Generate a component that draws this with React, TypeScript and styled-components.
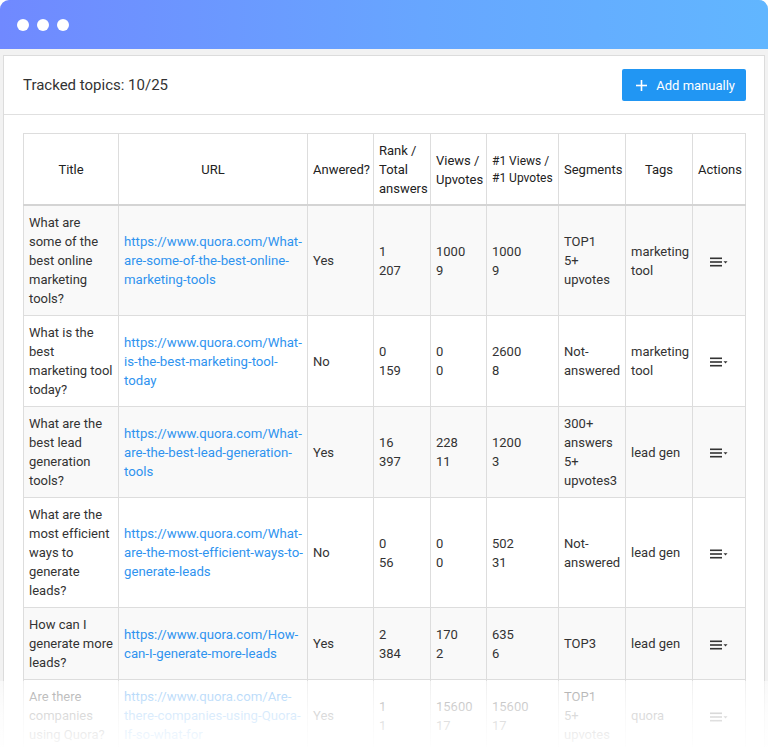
import styled, { createGlobalStyle } from "styled-components";

const GlobalStyle = createGlobalStyle`
    html, body {
        margin: 0;
        padding: 0;
        background: #fff;
    }
    body {
        font-family: Roboto, "Liberation Sans", sans-serif;
        color: #333;
    }
`;

type Topic = {
    title: string;
    url: string;
    answered: string;
    rank: [string, string];
    views: [string, string];
    top: [string, string];
    segments: string[];
    tags: string;
};

const topics: Topic[] = [
    {
        title: "What are some of the best online marketing tools?",
        url: "https://www.quora.com/What-are-some-of-the-best-online-marketing-tools",
        answered: "Yes",
        rank: ["1", "207"],
        views: ["1000", "9"],
        top: ["1000", "9"],
        segments: ["TOP1", "5+ upvotes"],
        tags: "marketing tool",
    },
    {
        title: "What is the best marketing tool today?",
        url: "https://www.quora.com/What-is-the-best-marketing-tool-today",
        answered: "No",
        rank: ["0", "159"],
        views: ["0", "0"],
        top: ["2600", "8"],
        segments: ["Not-answered"],
        tags: "marketing tool",
    },
    {
        title: "What are the best lead generation tools?",
        url: "https://www.quora.com/What-are-the-best-lead-generation-tools",
        answered: "Yes",
        rank: ["16", "397"],
        views: ["228", "11"],
        top: ["1200", "3"],
        segments: ["300+ answers", "5+ upvotes3"],
        tags: "lead gen",
    },
    {
        title: "What are the most efficient ways to generate leads?",
        url: "https://www.quora.com/What-are-the-most-efficient-ways-to-generate-leads",
        answered: "No",
        rank: ["0", "56"],
        views: ["0", "0"],
        top: ["502", "31"],
        segments: ["Not-answered"],
        tags: "lead gen",
    },
    {
        title: "How can I generate more leads?",
        url: "https://www.quora.com/How-can-I-generate-more-leads",
        answered: "Yes",
        rank: ["2", "384"],
        views: ["170", "2"],
        top: ["635", "6"],
        segments: ["TOP3"],
        tags: "lead gen",
    },
    {
        title: "Are there companies using Quora?",
        url: "https://www.quora.com/Are-there-companies-using-Quora-If-so-what-for",
        answered: "Yes",
        rank: ["1", "1"],
        views: ["15600", "17"],
        top: ["15600", "17"],
        segments: ["TOP1", "5+ upvotes"],
        tags: "quora",
    },
];

const columns = [95, 189, 66, 57, 56, 72, 67, 67, 53];

function MenuIcon() {
    return (
        <svg width="18" height="10" viewBox="0 0 18 10">
            <rect x="0" y="0.5" width="12" height="1.6" fill="#333" />
            <rect x="0" y="4.2" width="12" height="1.6" fill="#333" />
            <rect x="0" y="7.9" width="12" height="1.6" fill="#333" />
            <path d="M13.5 4.2 L17.5 4.2 L15.5 6.4 Z" fill="#333" />
        </svg>
    );
}

function PlusIcon() {
    return (
        <svg width="11" height="11" viewBox="0 0 11 11">
            <rect x="4.7" y="0" width="1.6" height="11" fill="#fff" />
            <rect x="0" y="4.7" width="11" height="1.6" fill="#fff" />
        </svg>
    );
}

export default function App() {
    return (
        <Page>
            <GlobalStyle />
            <Window>
                <TitleBar>
                    <Dot />
                    <Dot />
                    <Dot />
                </TitleBar>
                <Body>
                    <Card>
                        <CardHeader>
                            <Counter>Tracked topics: 10/25</Counter>
                            <AddButton>
                                <PlusIcon />
                                Add manually
                            </AddButton>
                        </CardHeader>
                        <CardBody>
                            <Table>
                                <colgroup>
                                    {columns.map((w, i) => (
                                        <col key={i} style={{ width: w }} />
                                    ))}
                                </colgroup>
                                <thead>
                                    <tr>
                                        <Th><HeadText>Title</HeadText></Th>
                                        <Th><HeadText>URL</HeadText></Th>
                                        <Th><HeadText>Anwered?</HeadText></Th>
                                        <Th><HeadText>Rank / Total answers</HeadText></Th>
                                        <Th><HeadText>Views / Upvotes</HeadText></Th>
                                        <Th><HeadText $small>#1 Views / #1 Upvotes</HeadText></Th>
                                        <Th><HeadText>Segments</HeadText></Th>
                                        <Th><HeadText>Tags</HeadText></Th>
                                        <Th><HeadText>Actions</HeadText></Th>
                                    </tr>
                                </thead>
                                <tbody>
                                    {topics.map((t, i) => (
                                        <Row key={i} $striped={i % 2 === 0}>
                                            <Td>{t.title}</Td>
                                            <Td $tight><UrlLink href="#">{t.url}</UrlLink></Td>
                                            <Td>{t.answered}</Td>
                                            <Td>{t.rank[0]}<br />{t.rank[1]}</Td>
                                            <Td>{t.views[0]}<br />{t.views[1]}</Td>
                                            <Td>{t.top[0]}<br />{t.top[1]}</Td>
                                            <Td>
                                                {t.segments.map((s, j) => (
                                                    <div key={j}>{s}</div>
                                                ))}
                                            </Td>
                                            <Td>{t.tags}</Td>
                                            <ActionCell>
                                                <MenuIcon />
                                            </ActionCell>
                                        </Row>
                                    ))}
                                </tbody>
                            </Table>
                        </CardBody>
                    </Card>
                </Body>
            </Window>
            <Fade />
        </Page>
    );
}

const Page = styled.div`
    position: relative;
    width: 768px;
    height: 747px;
    overflow: hidden;
`;

const Window = styled.div`
    border-radius: 9px 9px 0 0;
    overflow: hidden;
    background: #f2f2f2;
    min-height: 747px;
`;

const TitleBar = styled.div`
    display: flex;
    align-items: center;
    gap: 8px;
    height: 49px;
    padding-left: 17px;
    background: linear-gradient(90deg, #7089ff 0%, #67a6ff 55%, #61b6ff 100%);
`;

const Dot = styled.span`
    width: 12px;
    height: 12px;
    border-radius: 50%;
    background: #fff;
`;

const Body = styled.div`
    padding: 6px 3px 0 3px;
`;

const Card = styled.div`
    background: #fff;
    border: 1px solid #dcdcdc;
    border-bottom: 0;
    min-height: 700px;
`;

const CardHeader = styled.div`
    display: flex;
    align-items: center;
    justify-content: space-between;
    height: 58px;
    padding: 0 18px 0 19px;
    border-bottom: 1px solid #e0e0e0;
`;

const Counter = styled.div`
    font-size: 15px;
    color: #333;
`;

const AddButton = styled.button`
    display: flex;
    align-items: center;
    gap: 9px;
    height: 32px;
    padding: 0 11px 0 14px;
    border: 0;
    border-radius: 2px;
    background: #2196f3;
    color: #fff;
    font-family: Roboto, "Liberation Sans", sans-serif;
    font-size: 13px;
    font-weight: 400;
    cursor: pointer;
`;

const CardBody = styled.div`
    padding: 18px 18px 0 19px;
`;

const Table = styled.table`
    width: 722px;
    table-layout: fixed;
    border-collapse: collapse;
    font-size: 13px;
    line-height: 19px;
    border: 1px solid #ddd;
`;

const Th = styled.th`
    padding: 7px 5px 6px 5px;
    text-align: center;
    vertical-align: middle;
    font-weight: 400;
    color: #222;
    border: 1px solid #ddd;
    border-bottom: 2px solid #d4d4d4;
`;

const HeadText = styled.span<{ $small?: boolean }>`
    display: inline-block;
    text-align: left;
    font-size: ${(p) => (p.$small ? "12px" : "13px")};
    line-height: ${(p) => (p.$small ? "17px" : "19px")};
`;

const Row = styled.tr<{ $striped: boolean }>`
    background: ${(p) => (p.$striped ? "#f9f9f9" : "#fff")};
`;

const Td = styled.td<{ $tight?: boolean }>`
    padding: 7px ${(p) => (p.$tight ? "4px" : "5px")} 7px 5px;
    vertical-align: middle;
    color: #333;
    border: 1px solid #ddd;
    overflow-wrap: normal;
    font-variant-ligatures: none;
`;

const ActionCell = styled(Td)`
    text-align: center;
    svg {
        display: inline-block;
        vertical-align: middle;
    }
`;

const UrlLink = styled.a`
    color: #2f93ef;
    font-size: 13.2px;
    text-decoration: none;
    font-variant-ligatures: none;
`;

const Fade = styled.div`
    position: absolute;
    left: 0;
    right: 0;
    top: 681px;
    bottom: 0;
    background: linear-gradient(
        180deg,
        rgba(255, 255, 255, 0.55) 0%,
        rgba(255, 255, 255, 0.8) 45%,
        rgba(255, 255, 255, 0.97) 100%
    );
    pointer-events: none;
`;
